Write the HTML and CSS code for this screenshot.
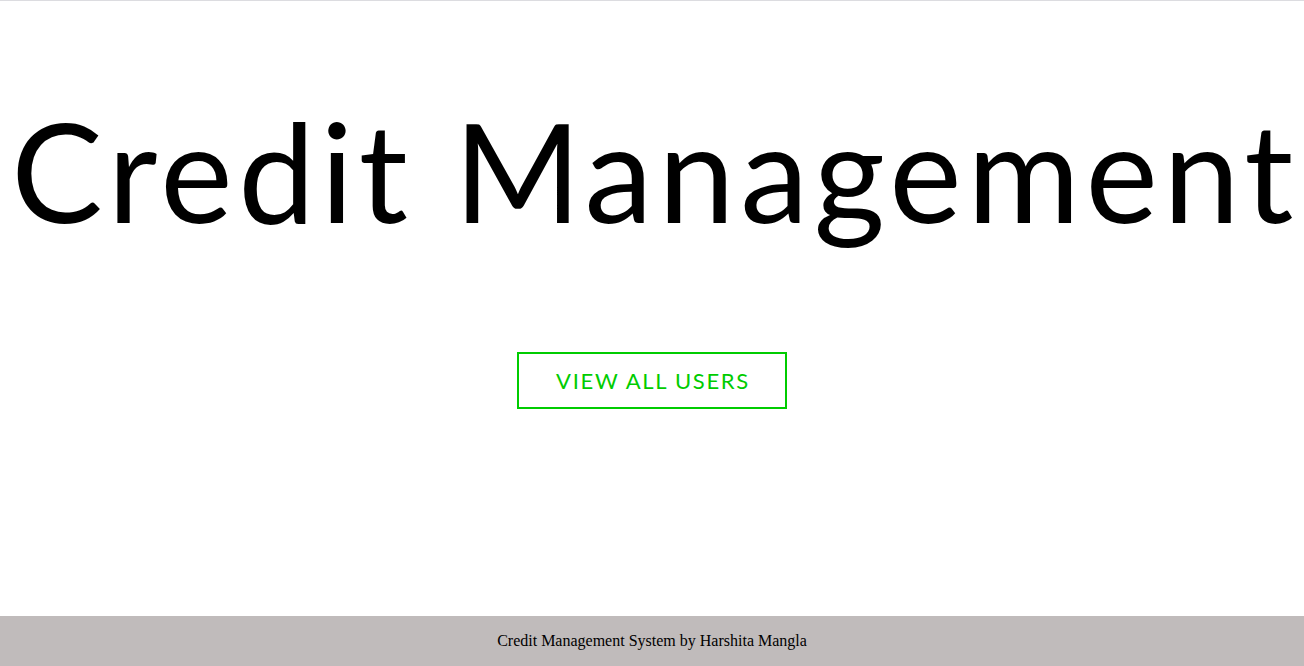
FILE: index.html
```html
<!DOCTYPE html>
<html>
<head>
<meta charset="utf-8">
<link rel="stylesheet" href="styles.css">
</head>
<body>
<div class="page">
  <main class="hero">
    <h1 class="title">Credit Management</h1>
    <a class="btn" href="#">VIEW ALL USERS</a>
  </main>
  <footer class="footer">Credit Management System by Harshita Mangla</footer>
</div>
</body>
</html>
```

FILE: styles.css
```css
html, body {
  margin: 0;
  padding: 0;
  background: #fff;
}
.page {
  height: 666px;
  display: flex;
  flex-direction: column;
  border-top: 1px solid #dcdce0;
  box-sizing: border-box;
}
.hero {
  flex: 1;
  display: flex;
  flex-direction: column;
  align-items: center;
}
.title {
  margin: 80px 0 0;
  padding-left: 6px;
  font-family: Lato, "Open Sans", sans-serif;
  font-weight: 400;
  font-size: 137px;
  line-height: 178px;
  letter-spacing: 5.5px;
  color: #000;
  white-space: nowrap;
}
.btn {
  margin-top: 93px;
  width: 270px;
  height: 57px;
  box-sizing: border-box;
  border: 2px solid #00cc00;
  display: flex;
  align-items: center;
  justify-content: center;
  padding-left: 2px;
  font-family: Lato, "Open Sans", sans-serif;
  font-size: 22px;
  letter-spacing: 1.7px;
  color: #00cc00;
  text-decoration: none;
}
.footer {
  height: 50px;
  background: #c0bbbb;
  display: flex;
  align-items: center;
  justify-content: center;
  font-family: "Liberation Serif", serif;
  font-size: 16px;
  color: #000;
}
```
